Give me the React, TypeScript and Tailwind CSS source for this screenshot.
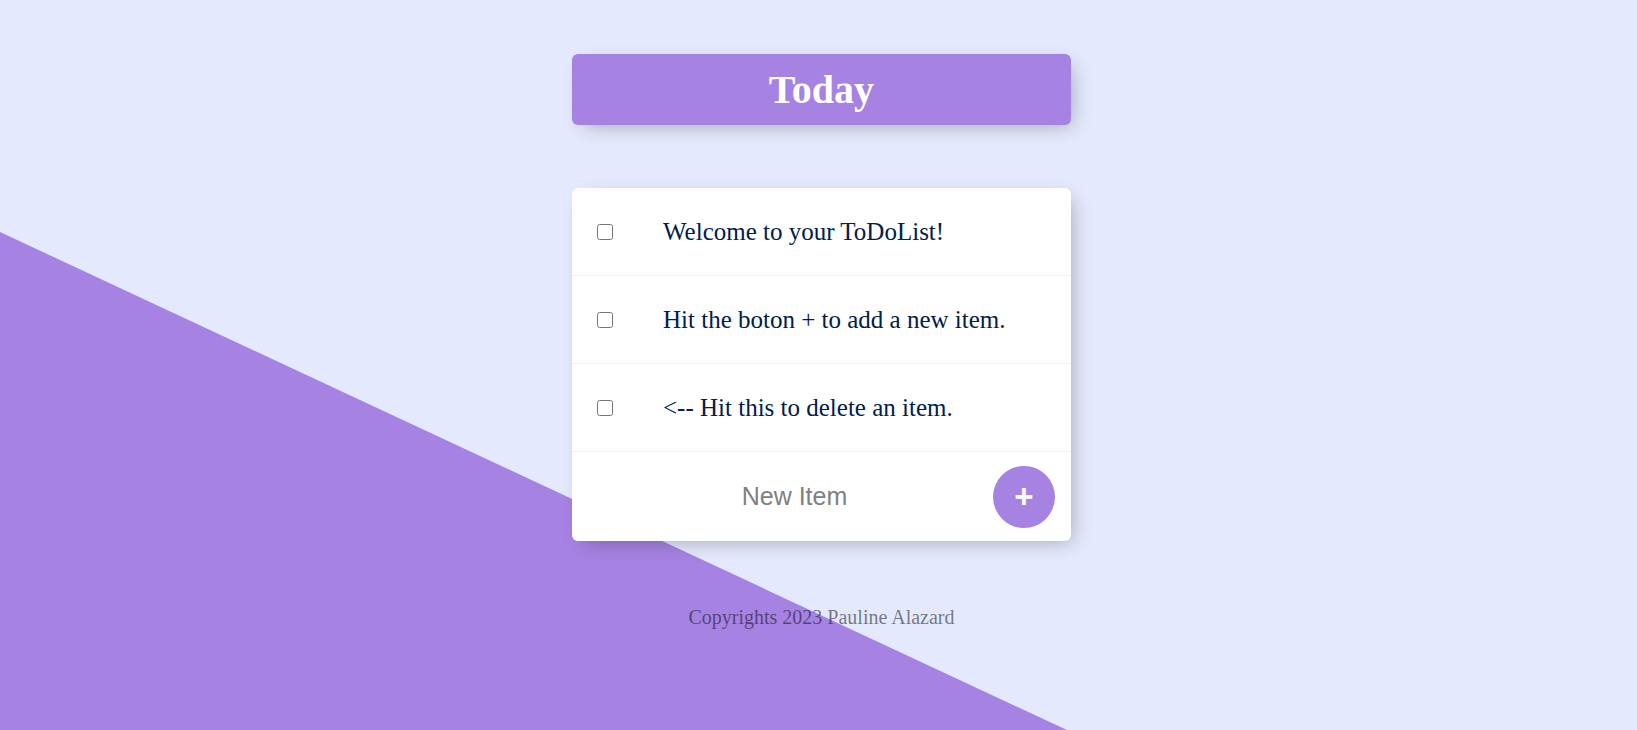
import React from "react";

export default function App() {
  const items = [
    "Welcome to your ToDoList!",
    "Hit the boton + to add a new item.",
    "<-- Hit this to delete an item.",
  ];

  return (
    <div className="relative h-[730px] overflow-hidden bg-[#E4E9FD] font-['Liberation_Serif',serif]">
      {/* diagonal purple background */}
      <div className="absolute inset-0 bg-[#A683E3] [clip-path:polygon(0_232px,1067px_730px,0_730px)]" />

      <div className="relative flex flex-col items-center pl-[6px] pt-[54px]">
        <div className="w-[499px] rounded-[6px] bg-[#A683E3] py-[12.5px] text-center shadow-[6px_6px_19px_-6px_rgba(0,0,0,0.3)]">
          <h1 className="text-[40px] leading-[46px] font-bold text-white">Today</h1>
        </div>

        <div className="mt-[63px] w-[499px] rounded-[6px] bg-white shadow-[6px_6px_19px_-6px_rgba(0,0,0,0.3)]">
          {items.map((item, i) => (
            <div key={i} className="flex h-[88px] items-center border-b border-[#F1F1F1]">
              <input type="checkbox" className="m-[25px] h-4 w-4" />
              <p className="p-[25px] text-[25px] text-[#00204a]">{item}</p>
            </div>
          ))}
          <form className="ml-[25px] flex h-[89px] items-center" onSubmit={(e) => e.preventDefault()}>
            <input
              type="text"
              placeholder="New Item"
              className="h-[75px] w-[383px] pl-[12px] text-center font-['Liberation_Sans',sans-serif] text-[25px] outline-none placeholder:text-[grey]"
            />
            <button
              type="submit"
              className="ml-[13px] flex h-[62px] w-[62px] items-center justify-center rounded-full bg-[#A683E3] font-['Liberation_Sans',sans-serif] text-[33px] leading-none font-bold text-white"
            >
              +
            </button>
          </form>
        </div>

        <footer className="mt-[61px] text-center text-[20px] text-black/50">
          Copyrights 2023 Pauline Alazard
        </footer>
      </div>
    </div>
  );
}
